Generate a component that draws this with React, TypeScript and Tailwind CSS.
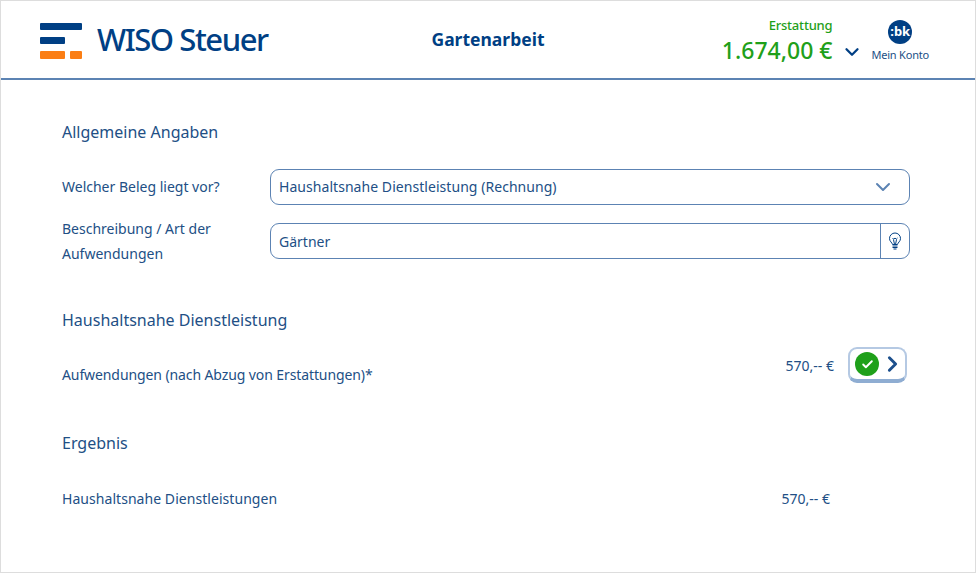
import { ChevronDown, ChevronRight, Check } from 'lucide-react';

const FONT = "font-['Noto_Sans',sans-serif]";

function Logo() {
    return (
        <svg width="42" height="36" viewBox="0 0 42 36" className="shrink-0 mt-[3px]">
            <rect x="0" y="0" width="42" height="7" rx="1" fill="#003f84" />
            <rect x="0" y="14" width="25" height="7" rx="1" fill="#003f84" />
            <rect x="0" y="28" width="25" height="8" rx="1" fill="#fb7e14" />
            <rect x="30" y="28" width="12" height="8" rx="1" fill="#fb7e14" />
        </svg>
    );
}

function Bulb() {
    return (
        <svg width="14" height="18" viewBox="0 0 14 18" fill="none" stroke="#003f84" strokeWidth="1">
            <path d="M4.5 12.5C4.2 10.5 1.5 9.5 1.5 6.5a5.5 5.5 0 0 1 11 0c0 3-2.7 4-3 6z" />
            <path d="M4.500 6l1.200 1.200L7 6l1.300 1.200L9.500 6M5.500 7.500l1 5M8.500 7.500l-1 5" />
            <path d="M4.500 14h5M4.500 15.500h5M5.500 17h3" />
        </svg>
    );
}

export default function App() {
    return (
        <div className={`${FONT} w-[976px] h-[573px] bg-white border border-[#dddddd] text-[#224f85] overflow-hidden`}>
            {/* Header */}
            <header className="h-[79px] border-b-2 border-[#5c83b3] flex items-center pl-[39px] pr-[46px]">
                <div className="w-[340px] flex items-center gap-[15px]">
                    <Logo />
                    <span className="text-[31px] leading-none font-medium text-[#003f84] tracking-[-1.45px] whitespace-nowrap">WISO Steuer</span>
                </div>
                <div className="w-[216px] text-center text-[17.5px] font-bold text-[#003f84] pb-[1px]">Gartenarbeit</div>
                <div className="flex-1 flex justify-end items-center">
                    <div className="flex flex-col items-end mt-[2px]">
                        <span className="text-[13px] leading-[18px] font-medium text-[#1fa01a] tracking-[-0.2px]">Erstattung</span>
                        <span className="text-[23px] leading-[32px] font-medium text-[#1fa01a] whitespace-nowrap">1.674,00 €</span>
                    </div>
                    <ChevronDown size={22} strokeWidth={2.5} className="text-[#003f84] mt-[25px] ml-[9px] mr-[8px]" />
                    <div className="flex flex-col items-center">
                        <div className="w-[24px] h-[24px] mt-[2px] rounded-full bg-[#003f84] text-white text-[13px] font-bold flex items-center justify-center leading-none">:bk</div>
                        <span className="text-[11px] leading-[14px] mt-[4px] whitespace-nowrap tracking-[-0.2px]">Mein Konto</span>
                    </div>
                </div>
            </header>

            <main className="pl-[61px] pr-[65px]">
                <h2 className="text-[16px] leading-[22px] mt-[41px] text-[#224f85]">Allgemeine Angaben</h2>

                <div className="flex items-center mt-[26px]">
                    <label className="w-[208px] text-[14px] pb-[2px]">Welcher Beleg liegt vor?</label>
                    <div className="flex-1 h-[36px] border border-[#5c83b3] rounded-[9px] flex items-center justify-between pl-[8px] pr-[14px] text-[14px]">
                        <span className="pb-[2px] tracking-[0.05px]">Haushaltsnahe Dienstleistung (Rechnung)</span>
                        <ChevronDown size={24} className="text-[#5c83b3]" strokeWidth={2} />
                    </div>
                </div>

                <div className="flex items-start mt-[18px]">
                    <label className="w-[208px] text-[14px] leading-[25px] -mt-[7px]">Beschreibung / Art der<br />Aufwendungen</label>
                    <div className="flex-1 h-[36px] border border-[#5c83b3] rounded-[9px] flex items-center text-[14px]">
                        <span className="flex-1 pl-[8px]">Gärtner</span>
                        <div className="w-[29px] h-full border-l border-[#5c83b3] flex items-center justify-center">
                            <Bulb />
                        </div>
                    </div>
                </div>

                <h2 className="text-[16px] leading-[22px] mt-[43px]">Haushaltsnahe Dienstleistung</h2>

                <div className="flex items-start mt-[16px] text-[14px]">
                    <span className="flex-1 mt-[17px] tracking-[-0.1px]">Aufwendungen (nach Abzug von Erstattungen)*</span>
                    <span className="mt-[8px] mr-[14px]">570,-- €</span>
                    <div className="w-[59px] h-[36px] border-2 border-[#b5c9e3] border-b-[4px] border-b-[#8fadd2] rounded-[9px] flex items-center pl-[5px] mr-[3px]">
                        <div className="w-[24px] h-[24px] shrink-0 rounded-full bg-[#1fa01a] flex items-center justify-center">
                            <Check size={13} strokeWidth={3.5} className="text-white" />
                        </div>
                        <ChevronRight size={26} strokeWidth={2.8} className="text-[#1c4f8c] ml-[1px]" />
                    </div>
                </div>

                <h2 className="text-[16px] leading-[22px] mt-[47px]">Ergebnis</h2>

                <div className="flex justify-between mt-[34px] text-[14px] pr-[80px]">
                    <span className="tracking-[0.05px]">Haushaltsnahe Dienstleistungen</span>
                    <span>570,-- €</span>
                </div>
            </main>
        </div>
    );
}
